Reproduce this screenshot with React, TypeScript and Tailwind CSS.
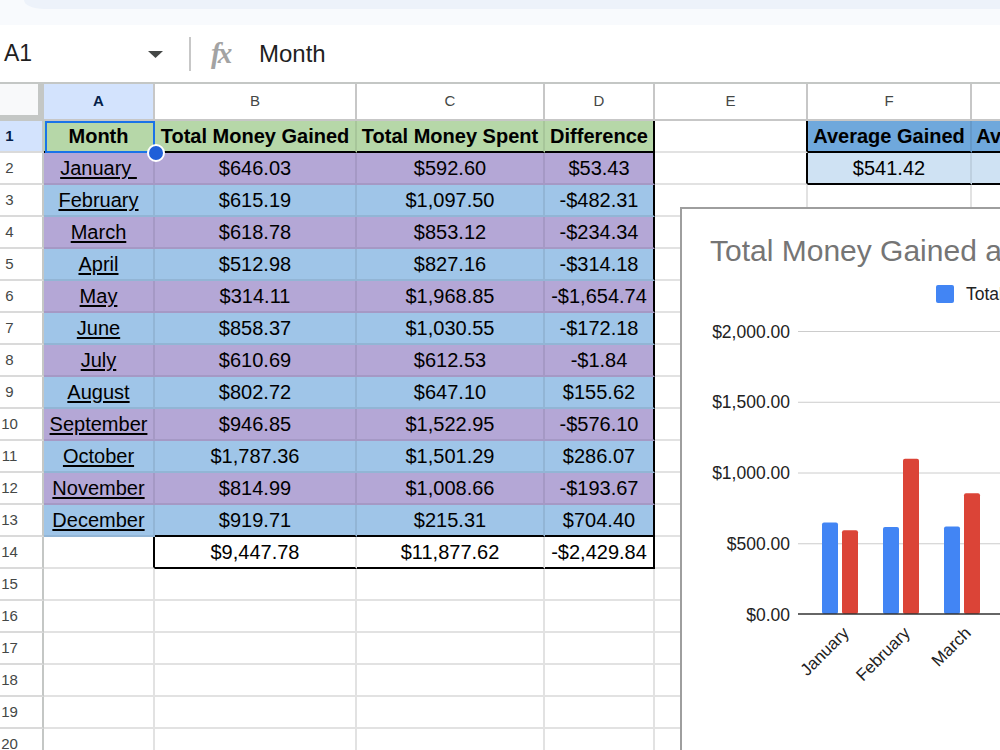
import clsx from 'clsx';

// row data for the monthly sheet
const months: [string, string, string, string][] = [
  ['January\u00a0', '$646.03', '$592.60', '$53.43'],
  ['February', '$615.19', '$1,097.50', '-$482.31'],
  ['March', '$618.78', '$853.12', '-$234.34'],
  ['April', '$512.98', '$827.16', '-$314.18'],
  ['May', '$314.11', '$1,968.85', '-$1,654.74'],
  ['June', '$858.37', '$1,030.55', '-$172.18'],
  ['July', '$610.69', '$612.53', '-$1.84'],
  ['August', '$802.72', '$647.10', '$155.62'],
  ['September', '$946.85', '$1,522.95', '-$576.10'],
  ['October', '$1,787.36', '$1,501.29', '$286.07'],
  ['November', '$814.99', '$1,008.66', '-$193.67'],
  ['December', '$919.71', '$215.31', '$704.40'],
];

const chartData = [
  { m: 'January', g: 646.03, s: 592.6 },
  { m: 'February', g: 615.19, s: 1097.5 },
  { m: 'March', g: 618.78, s: 853.12 },
  { m: 'April', g: 512.98, s: 827.16 },
];

const cols = ['A', 'B', 'C', 'D', 'E', 'F', 'G'];

interface CellSpec {
  text?: string;
  bg?: string;
  bold?: boolean;
  link?: boolean;
  rBlack?: boolean;
  bBlack?: boolean;
}

function buildRow(r: number): CellSpec[] {
  const row: CellSpec[] = cols.map(() => ({}));
  if (r === 1) {
    ['Month', 'Total Money Gained', 'Total Money Spent', 'Difference'].forEach((t, i) => {
      row[i] = { text: t, bg: 'bg-[#b6d7a8]', bold: true, bBlack: true };
    });
    row[3].rBlack = true;
    row[4] = { rBlack: true };
    row[5] = { text: 'Average Gained', bg: 'bg-[#6fa8dc]', bold: true, bBlack: true };
    row[6] = { text: 'Average Spent', bg: 'bg-[#6fa8dc]', bold: true, bBlack: true };
  } else if (r <= 13) {
    const d = months[r - 2];
    const bg = r % 2 === 0 ? 'bg-[#b4a7d6]' : 'bg-[#9fc5e8]';
    d.forEach((t, i) => {
      row[i] = { text: t, bg, link: i === 0, bBlack: r === 13 && i > 0 };
    });
    row[3].rBlack = true;
    if (r === 2) {
      row[4] = { rBlack: true };
      row[5] = { text: '$541.42', bg: 'bg-[#cfe2f3]', bBlack: true };
      row[6] = { text: '$989.80', bg: 'bg-[#cfe2f3]', bBlack: true };
    }
  } else if (r === 14) {
    row[0] = { rBlack: true };
    row[1] = { text: '$9,447.78', bBlack: true };
    row[2] = { text: '$11,877.62', bBlack: true };
    row[3] = { text: '-$2,429.84', bBlack: true, rBlack: true };
  }
  return row;
}

function Cell({ spec, selected }: { spec: CellSpec; selected?: boolean }) {
  return (
    <div
      className={clsx(
        'flex items-center justify-center whitespace-nowrap text-[20px] leading-none text-black border-r-2 border-b-2',
        spec.bg ? 'border-black/[0.08]' : 'border-[#e2e2e2]',
        spec.bg,
        spec.rBlack && 'border-r-black',
        spec.bBlack && 'border-b-black',
        spec.bold && 'font-bold',
        selected && 'relative'
      )}
    >
      <span className={clsx(spec.link && 'underline decoration-[1.5px] underline-offset-[2px]')}>{spec.text}</span>
      {selected && (
        <>
          <div className="absolute left-[1px] top-0 -right-[2px] -bottom-[2px] border-2 border-[#1a73e8] z-10" />
          <div className="absolute left-[103px] top-[23px] w-[18px] h-[18px] rounded-full bg-[#1f5fd8] border-2 border-white z-20" />
        </>
      )}
    </div>
  );
}

function Chart() {
  const base = 614;
  const step = 70.75;
  const scale = (base - 331) / 2000;
  const labels = ['$2,000.00', '$1,500.00', '$1,000.00', '$500.00', '$0.00'];
  const font = "'Liberation Sans', Arial, sans-serif";

  return (
    <div className="absolute left-[680px] top-[207px] w-[340px] h-[560px] border-2 border-[#9e9e9e] bg-white z-30">
      <svg width="336" height="556" viewBox="682 209 336 556" fontFamily={font}>
        <text x="710" y="261" fontSize="30" fill="#757575">
          Total Money Gained and Total Money Spent
        </text>
        <rect x="936" y="285" width="18" height="18" rx="2" fill="#4285f4" />
        <text x="966" y="300" fontSize="17.5" fill="#222">
          Total Money Gained
        </text>
        {[0, 1, 2, 3].map((i) => (
          <line key={i} x1="798" x2="1020" y1={331.5 + i * step} y2={331.5 + i * step} stroke="#cccccc" strokeWidth="1" />
        ))}
        {labels.map((l, i) => (
          <text key={l} x="790" y={331 + i * step + 6.5} fontSize="17.5" fill="#222" textAnchor="end">
            {l}
          </text>
        ))}
        {chartData.map((d, i) => {
          const x = 822 + i * 61;
          const hg = d.g * scale;
          const hs = d.s * scale;
          return (
            <g key={d.m}>
              <rect x={x} y={base - hg} width="16" height={hg} rx="2" fill="#4285f4" />
              <rect x={x + 20} y={base - hs} width="16" height={hs} rx="2" fill="#db4437" />
              <text
                transform={`translate(${x + 28} 634) rotate(-45)`}
                fontSize="17"
                fill="#222"
                textAnchor="end"
              >
                {d.m}
              </text>
            </g>
          );
        })}
        <line x1="798" x2="1020" y1={base} y2={base} stroke="#333333" strokeWidth="1.5" />
      </svg>
    </div>
  );
}

export default function App() {
  const rows = Array.from({ length: 20 }, (_, i) => i + 1);

  return (
    <div className="relative w-[1000px] h-[750px] overflow-hidden bg-white font-['Liberation_Sans',Arial,sans-serif]">
      {/* top strip */}
      <div className="h-[25px] bg-[#f8fafd]">
        <div className="h-[9px] ml-[24px] bg-[#edf2fa] rounded-bl-[20px_9px]" />
      </div>

      {/* name box + formula bar */}
      <div className="h-[57px] flex items-center text-[#1f1f1f]">
        <span className="ml-[4px] w-[144px] text-[23px] leading-none">A1</span>
        <svg width="15" height="7" viewBox="0 0 15 7" className="mt-[2px]">
          <path d="M0 0 L15 0 L7.5 7 Z" fill="#444746" />
        </svg>
        <div className="ml-[26px] w-[2px] h-[34px] bg-[#c7c7c7]" />
        <span className="ml-[20px] w-[48px] text-[29px] leading-none italic font-bold text-[#a3a3a3] tracking-[-3px] font-['Liberation_Serif',serif]">
          fx
        </span>
        <span className="text-[24px] leading-none">Month</span>
      </div>

      {/* sheet grid */}
      <div className="grid w-max grid-cols-[44px_111px_202px_188px_110px_153px_164px_150px] grid-rows-[37px] auto-rows-[32px] border-t-2 border-[#c4c7c5]">
        <div className="bg-[#f8f9fa] border-r-[6px] border-b-[6px] border-[#c4c7c5]" />
        {cols.map((c) => (
          <div
            key={c}
            className={clsx(
              'flex items-center justify-center text-[15px] border-r-2 border-b-2 border-[#c7c7c7]',
              c === 'A' ? 'bg-[#d3e3fd] font-bold text-[#041e49]' : 'bg-white text-[#444746]'
            )}
          >
            {c}
          </div>
        ))}

        {rows.map((r) => {
          const specs = buildRow(r);
          return [
            <div
              key={`h${r}`}
              className={clsx(
                'flex items-center text-[15px] border-r-2 border-r-[#c4c7c5] border-b-2 border-b-[#dadada]',
                r === 1 ? 'bg-[#d3e3fd] font-bold text-[#041e49]' : 'bg-white text-[#444746]'
              )}
            >
              <div className="w-[19px] text-center">{r}</div>
            </div>,
            ...specs.map((s, i) => <Cell key={`${r}-${i}`} spec={s} selected={r === 1 && i === 0} />),
          ];
        })}
      </div>

      <Chart />
    </div>
  );
}
